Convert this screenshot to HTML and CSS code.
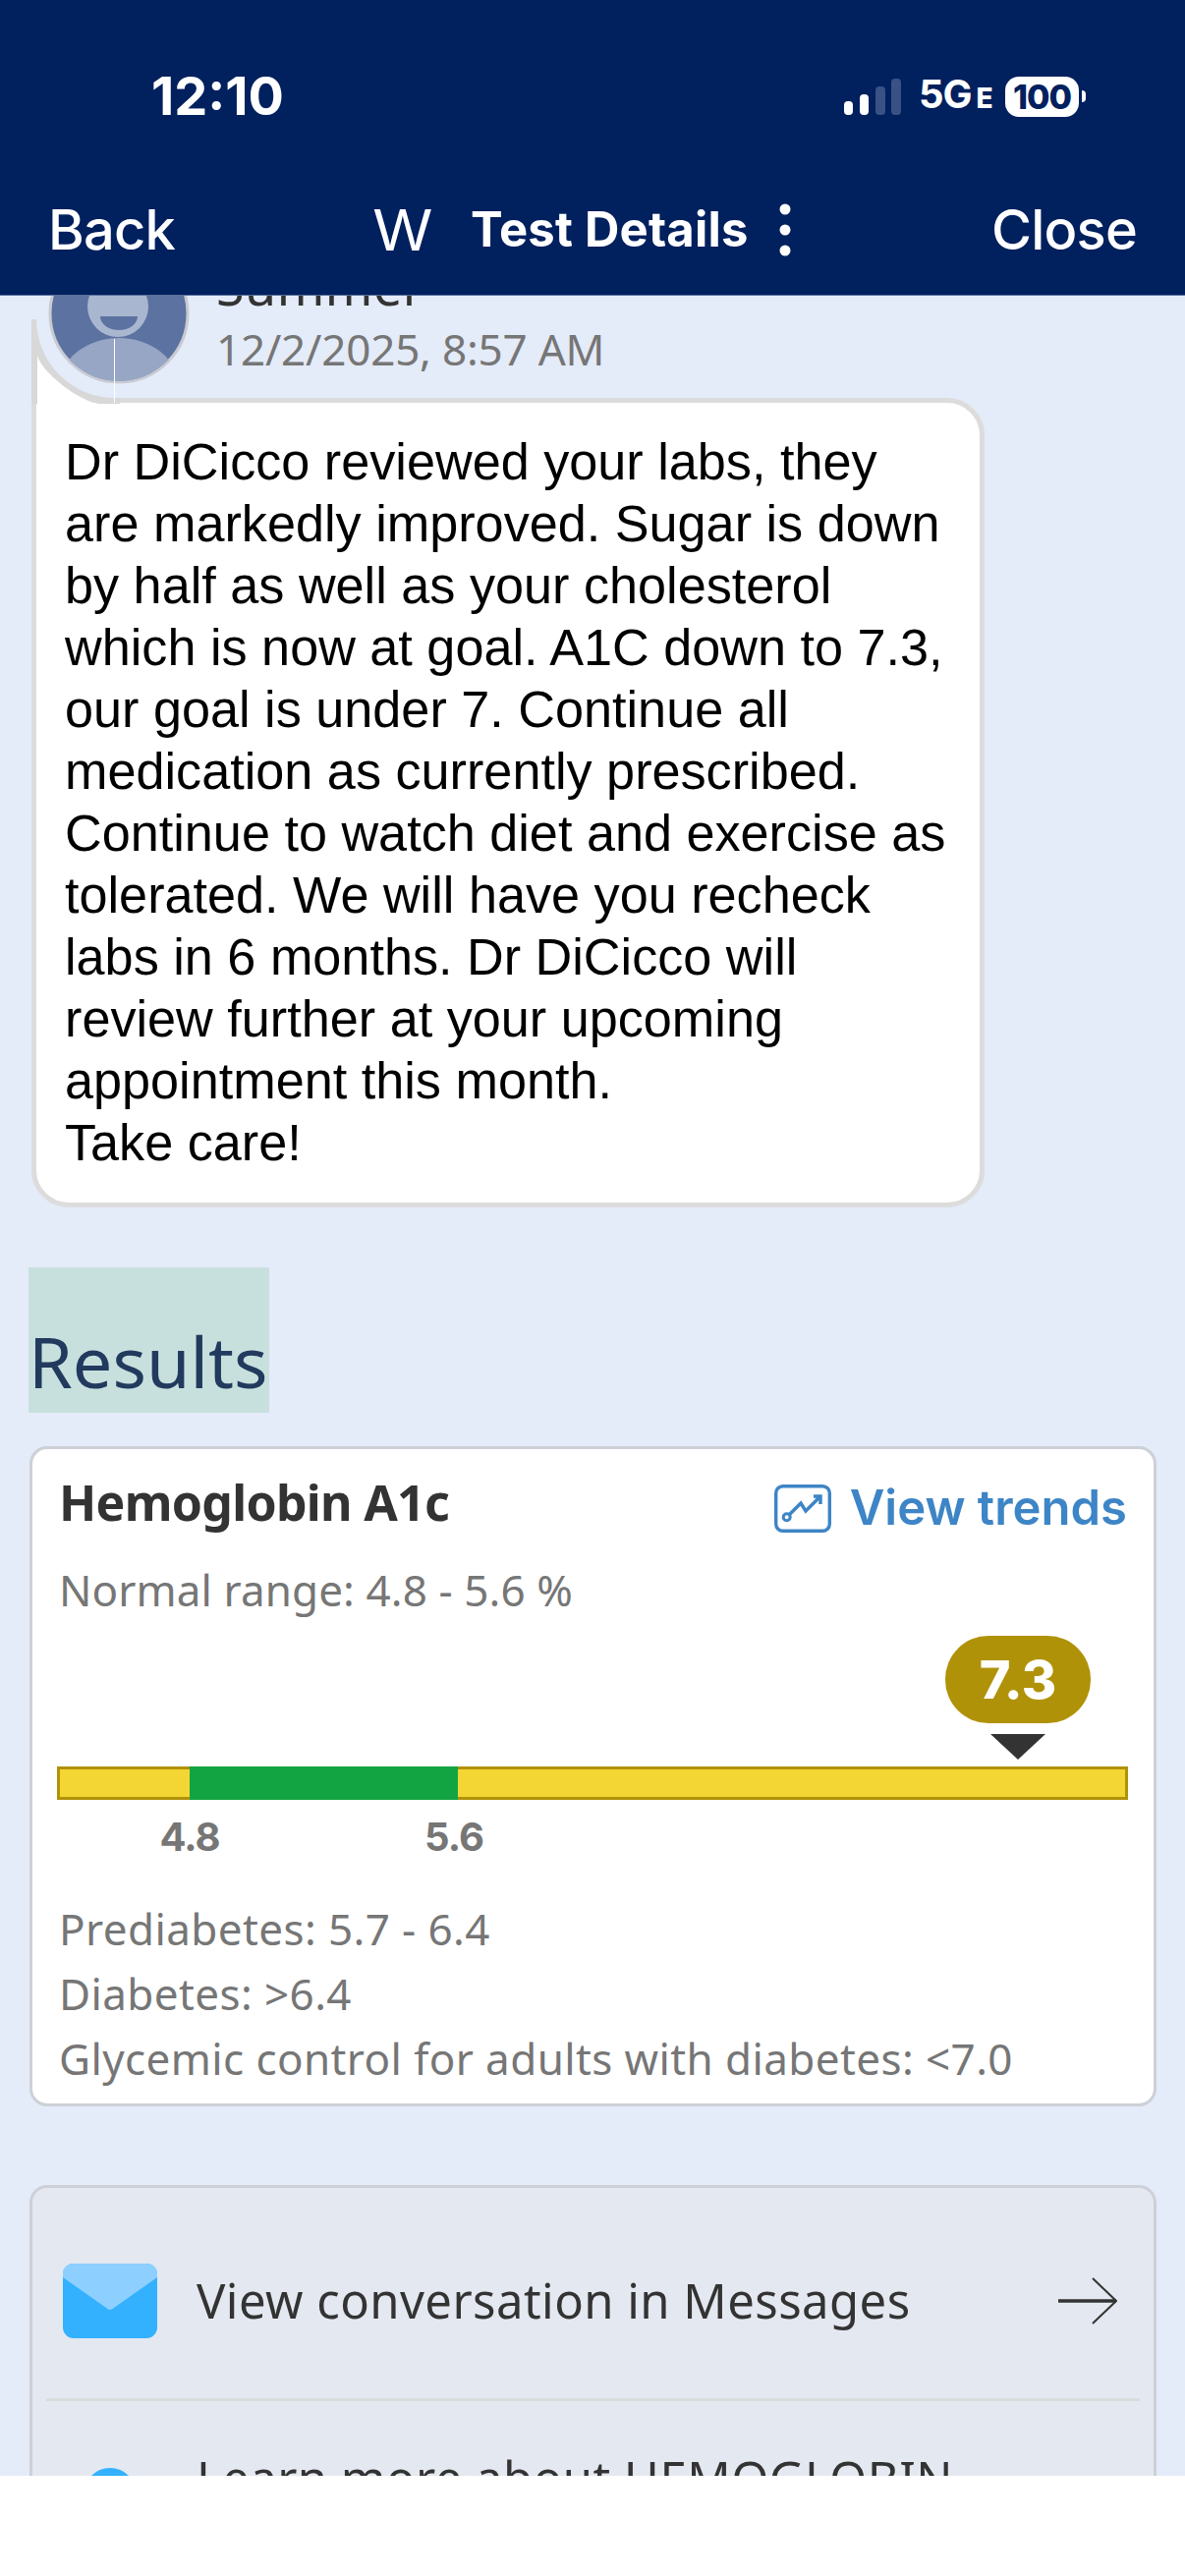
FILE: index.html
```html
<!DOCTYPE html>
<html lang="en">
<head>
<meta charset="utf-8">
<title>Test Details</title>
<link rel="stylesheet" href="styles.css">
</head>
<body>
<div class="page">
  <header class="topbar">
    <div class="status">
      <span class="time">12:10</span>
      <div class="status-right">
        <svg class="signal" width="58" height="38" viewBox="0 0 58 38"><rect x="0" y="23" width="9" height="14" rx="4" fill="#fff"/><rect x="16" y="16" width="9" height="21" rx="4" fill="#fff"/><rect x="32" y="8" width="10" height="29" rx="4" fill="#3a5185"/><rect x="48" y="0" width="10" height="37" rx="4" fill="#3a5185"/></svg>
        <span class="net">5G<small class="net-e">E</small></span>
        <span class="battery">100</span>
        <span class="nub"></span>
      </div>
    </div>
    <nav class="nav">
      <span class="nav-link">Back</span>
      <div class="nav-center">
        <span class="nav-w">W</span>
        <span class="nav-title">Test Details</span>
        <svg class="kebab" width="12" height="54" viewBox="0 0 12 54"><circle cx="6" cy="6" r="5.5" fill="#fff"/><circle cx="6" cy="27" r="5.5" fill="#fff"/><circle cx="6" cy="48" r="5.5" fill="#fff"/></svg>
      </div>
      <span class="nav-link">Close</span>
    </nav>
  </header>

  <main class="content">
    <div class="sender">
      <svg class="avatar" width="144" height="144" viewBox="0 0 144 144">
        <defs><clipPath id="av"><circle cx="72" cy="72" r="69"/></clipPath></defs>
        <circle cx="72" cy="72" r="70" fill="#5c72a0" stroke="#c9cbd2" stroke-width="3"/>
        <g clip-path="url(#av)">
          <ellipse cx="72" cy="145" rx="60" ry="48" fill="#97a6c4"/>
          <circle cx="71" cy="65" r="31" fill="#a9b6cf"/>
          <path d="M53 75 H91 A19 14 0 0 1 53 75 Z" fill="#5c72a0"/>
        </g>
      </svg>
      <div class="sender-text">
        <span class="sender-name">Summer</span>
        <span class="sender-date">12/2/2025, 8:57 AM</span>
      </div>
    </div>

    <div class="bubble">
      <svg class="notch" width="90" height="86" viewBox="0 0 90 86">
        <path d="M0 0 H5 A80 80 0 0 0 85 80 H90 V86 H0 Z" fill="#d8d8d8"/>
        <path d="M6 37 C10 50 30 68 48 78 S70 86 85 86 H6 Z" fill="#fff"/>
      </svg>
      <span class="seam"></span>
      Dr DiCicco reviewed your labs, they are markedly improved. Sugar is down by half as well as your cholesterol which is now at goal. A1C down to 7.3, our goal is under 7. Continue all medication as currently prescribed. Continue to watch diet and exercise as tolerated. We will have you recheck labs in 6 months. Dr DiCicco will review further at your upcoming appointment this month.<br>Take care!
    </div>

    <h2 class="results"><span class="results-text">Results</span></h2>

    <section class="card result-card">
      <div class="card-head">
        <span class="test-name">Hemoglobin A1c</span>
        <span class="trends">
          <svg class="trend-icon" width="58" height="49" viewBox="0 0 58 49" fill="none" stroke="#3d85c6"><rect x="1.700" y="1.700" width="54.600" height="45.600" rx="7" stroke-width="3.400"/><circle cx="12.700" cy="33.300" r="3.500" stroke-width="3"/><path d="M15 31 L27 19 L32 27 L47 12" stroke-width="3.500"/><path d="M40 12 H47 V20" stroke-width="3.500"/></svg>
          View trends
        </span>
      </div>
      <p class="range">Normal range: 4.8 - 5.6 %</p>
      <div class="gauge">
        <div class="marker">
          <span class="badge">7.3</span>
          <span class="pointer"></span>
        </div>
        <div class="bar"><span class="bar-ok"></span></div>
        <div class="ticks"><span class="tick tick-low">4.8</span><span class="tick tick-high">5.6</span></div>
      </div>
      <div class="notes">
        <p>Prediabetes: 5.7 - 6.4</p>
        <p>Diabetes: &gt;6.4</p>
        <p>Glycemic control for adults with diabetes: &lt;7.0</p>
      </div>
    </section>

    <section class="card link-card">
      <div class="link-row">
        <svg class="mail" width="96" height="76" viewBox="0 0 96 76"><rect width="96" height="76" rx="11" fill="#33b1ff"/><path d="M0 14 A11 11 0 0 1 11 0 H85 A11 11 0 0 1 96 14 L52 45 Q48 49 44 45 Z" fill="#8dd0ff"/></svg>
        <span class="link-text">View conversation in Messages</span>
        <svg class="arrow" width="60" height="48" viewBox="0 0 60 48" fill="none" stroke="#333"><path d="M0 24 H59" stroke-width="3.500"/><path d="M35 1 L59 24 L35 47" stroke-width="2"/></svg>
      </div>
      <div class="link-row link-row-next">
        <span class="info-dot"></span>
        <span class="link-text link-text-wrap">Learn more about HEMOGLOBIN A1C</span>
      </div>
    </section>
  </main>
  <div class="bottom"></div>
</div>
</body>
</html>
```

FILE: styles.css
```css
* { box-sizing: border-box; }
html, body { margin: 0; padding: 0; }
body { width: 1206px; height: 2622px; overflow: hidden; background: #fff; font-family: "Noto Sans", sans-serif; }
p, h2 { margin: 0; font-weight: 400; }
.page { display: flex; flex-direction: column; height: 2622px; }

.topbar { height: 301px; flex: none; background: #00205e; color: #fff; position: relative; z-index: 2; border-bottom: 1px solid #5a6f9c; }
.status { height: 199px; padding: 72px 101px 0 154px; display: flex; justify-content: space-between; align-items: flex-start; }
.time { font-family: Inter, sans-serif; font-weight: 700; font-size: 54px; line-height: 52px; }
.status-right { display: flex; align-items: center; height: 52px; }
.signal { margin-top: 2px; }
.net { font-family: Inter, sans-serif; font-weight: 700; font-size: 40px; line-height: 52px; margin-left: 18px; letter-spacing: -1px; display: flex; align-items: baseline; width: 70px; }
.net-e { font-size: 28px; font-weight: 800; margin-left: 5px; }
.battery { width: 75px; height: 41px; margin-left: 18px; background: #fff; border-radius: 14px; color: #00205e; font-family: Inter, sans-serif; font-weight: 800; font-size: 34px; line-height: 41px; text-align: center; letter-spacing: -1px; }
.nub { width: 4px; height: 12px; margin-left: 3px; background: #fff; border-radius: 0 6px 6px 0; }

.nav { display: flex; justify-content: space-between; align-items: center; height: 70px; padding: 0 49px; }
.nav-link { font-family: Inter, sans-serif; font-size: 56px; line-height: 70px; font-weight: 500; letter-spacing: -0.800px; }
.nav-center { display: flex; align-items: center; margin-right: 2px; }
.nav-w { font-family: "Liberation Sans", sans-serif; font-size: 62px; line-height: 70px; }
.nav-title { font-family: Inter, sans-serif; font-weight: 700; font-size: 49px; line-height: 70px; margin-left: 40px; letter-spacing: 0.200px; }
.kebab { margin-left: 31px; }

.content { flex: 1; min-height: 0; overflow: hidden; background: #e4ebf9; padding-left: 30px; padding-right: 29px; }
.sender { display: flex; margin-top: -54px; padding-left: 19px; align-items: flex-start; height: 158px; position: relative; z-index: 1; }
.avatar { flex: none; }
.sender-text { display: flex; flex-direction: column; margin-left: 27px; }
.sender-name { font-size: 52px; line-height: 62px; color: #333; margin-top: 13px; letter-spacing: 0.500px; }
.sender-date { font-size: 44px; line-height: 60px; color: #767676; letter-spacing: -0.200px; margin-top: 3px; }
.bubble { position: relative; width: 970px; height: 824px; margin-left: 2px; background: #fff; border: 5px solid #dcdcdc; border-radius: 0 38px 38px 38px; padding: 29px 24px 0 29px; font-family: "Liberation Sans", sans-serif; font-size: 52.200px; line-height: 63px; color: #000; }
.notch { position: absolute; left: -5px; top: -85px; }
.seam { position: absolute; left: 79px; top: -65px; width: 1px; height: 65px; background: #fff; z-index: 2; }
.results { display: flex; align-items: flex-end; width: 245px; height: 148px; margin: 61px 0 0 -1px; background: #c8e0dd; color: #223a5e; font-size: 72px; line-height: 96px; padding: 0 0 5px 0; }
.card { width: 1147px; border: 3px solid #cdd0d6; border-radius: 18px; }
.result-card { margin-top: 34px; height: 672px; background: #fff; padding: 0 27px 0 27px; }
.card-head { display: flex; justify-content: space-between; align-items: flex-start; padding-top: 24px; height: 113px; }
.test-name { font-weight: 700; font-size: 50px; line-height: 60px; color: #333; letter-spacing: -0.700px; }
.trends { display: flex; align-items: center; color: #3d85c6; font-family: Inter, sans-serif; font-size: 49px; line-height: 60px; font-weight: 600; gap: 19px; margin-top: 6px; }
.trend-icon { flex: none; }
.range { font-size: 44px; line-height: 60px; color: #767676; letter-spacing: 0.100px; }
.gauge { position: relative; height: 282px; }
.marker { position: absolute; left: 902px; top: 17px; width: 148px; display: flex; flex-direction: column; align-items: center; }
.badge { width: 148px; height: 89px; border-radius: 44px; background: #b09208; color: #fff; font-family: Inter, sans-serif; font-weight: 800; font-size: 54px; line-height: 89px; text-align: center; }
.pointer { margin-top: 11px; width: 0; height: 0; border-left: 28px solid transparent; border-right: 28px solid transparent; border-top: 26px solid #333; }
.bar { position: absolute; left: -2px; top: 150px; width: 1090px; height: 34px; background: #f3d633; border: 3px solid #b09208; }
.bar-ok { position: absolute; left: 132px; top: -3px; height: 34px; width: 273px; background: #12a443; }
.ticks { position: absolute; left: 1px; top: 197px; width: 100%; height: 50px; }
.tick { position: absolute; top: 0; width: 80px; margin-left: -40px; text-align: center; font-family: Inter, sans-serif; font-weight: 700; font-size: 40px; line-height: 50px; color: #767676; letter-spacing: -1px; }
.tick-low { left: 132px; }
.tick-high { left: 401px; }
.notes { display: flex; flex-direction: column; font-size: 44px; line-height: 66px; color: #767676; letter-spacing: 0.400px; }
.link-card { margin-top: 80px; height: 400px; background: #e4e8f0; padding: 0 14px; }
.link-row { display: flex; align-items: center; height: 217px; padding: 16px 23px 0 17px; border-bottom: 3px solid #d8dcdc; }
.mail { flex: none; }
.link-text { font-size: 49px; line-height: 60px; color: #333; margin-left: 40px; margin-top: -2px; letter-spacing: 0.450px; flex: 1; }
.arrow { flex: none; }
.link-row-next { border-bottom: 0; align-items: flex-start; padding-top: 50px; height: auto; }
.info-dot { flex: none; width: 54px; height: 54px; margin: 18px 21px 0 21px; border-radius: 50%; background: #33b1ff; }
.link-text-wrap { margin-left: 40px; flex: none; width: 800px; }
.bottom { height: 102px; flex: none; background: #fff; }
```
